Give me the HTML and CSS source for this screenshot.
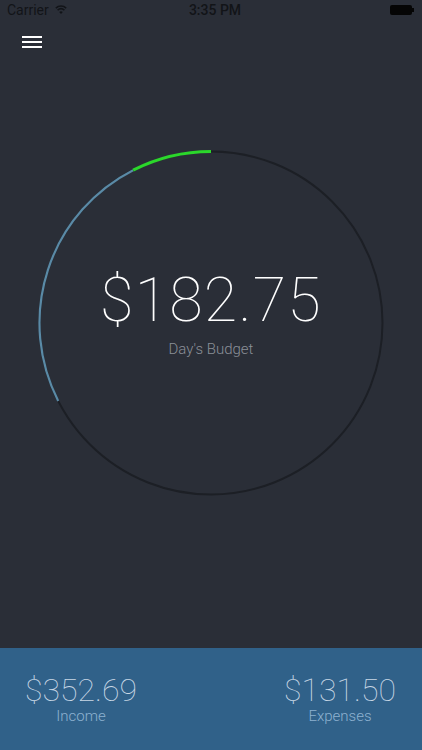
FILE: index.html
```html
<!DOCTYPE html>
<html lang="en">
<head>
    <meta charset="UTF-8">
    <meta name="viewport" content="width=device-width, initial-scale=1.0">
    <title>Day's Budget</title>
    <link rel="stylesheet" href="styles.css">
</head>
<body>
    <div class="app">
        <div class="status-bar">
            <div class="status-left">
                <span>Carrier</span>
                <svg class="wifi" width="12" height="9" viewBox="0 0 12 9">
                    <path d="M6 9 L4.2 6.9 A2.8 2.8 0 0 1 7.8 6.9 Z" fill="#121418"/>
                    <path d="M2.6 5.1 A5.2 5.2 0 0 1 9.4 5.1" fill="none" stroke="#121418" stroke-width="1.5"/>
                    <path d="M0.8 3.1 A7.8 7.8 0 0 1 11.2 3.1" fill="none" stroke="#121418" stroke-width="1.5"/>
                </svg>
            </div>
            <div class="status-time">3:35 PM</div>
            <div class="status-right">
                <span class="battery"></span>
                <span class="battery-nub"></span>
            </div>
        </div>

        <header class="nav">
            <button class="menu-btn" aria-label="Menu">
                <span></span><span></span><span></span>
            </button>
        </header>

        <main class="budget">
            <div class="ring">
                <svg class="ring-svg" width="346" height="346" viewBox="0 0 346 346">
                    <circle cx="173" cy="173" r="171.5" fill="none" stroke="#1c1f25" stroke-width="2"/>
                    <!-- blue part: 27deg to 117deg counter clockwise from top -->
                    <path d="M95.1 20.2 A171.5 171.5 0 0 0 20.2 250.9" fill="none" stroke="#5a8aa6" stroke-width="2.2"/>
                    <!-- green part: top to 27deg -->
                    <path d="M173 1.5 A171.5 171.5 0 0 0 95.1 20.2" fill="none" stroke="#2bd72b" stroke-width="3"/>
                </svg>
                <div class="ring-text">
                    <div class="amount">$182.75</div>
                    <div class="amount-label">Day's Budget</div>
                </div>
            </div>
        </main>

        <footer class="totals">
            <div class="total">
                <div class="total-value">$352.69</div>
                <div class="total-label">Income</div>
            </div>
            <div class="total">
                <div class="total-value">$131.50</div>
                <div class="total-label">Expenses</div>
            </div>
        </footer>
    </div>
</body>
</html>
```

FILE: styles.css
```css
body {
    margin: 0;
    padding: 0;
    font-family: Roboto, "Liberation Sans", Arial, sans-serif;
    background-color: #2a2e37;
}

.app {
    width: 422px;
    height: 750px;
    display: flex;
    flex-direction: column;
    background-color: #2a2e37;
    overflow: hidden;
}

/* status bar */
.status-bar {
    height: 20px;
    display: flex;
    align-items: center;
    justify-content: space-between;
    padding: 0 7px;
    font-size: 14px;
    color: #121418;
}

.status-left {
    display: flex;
    align-items: center;
    gap: 6px;
    width: 100px;
}

.wifi {
    margin-top: -1px;
}

.status-time {
    font-weight: 500;
    padding-left: 8px;
}

.status-right {
    width: 100px;
    display: flex;
    justify-content: flex-end;
    align-items: center;
}

.battery {
    width: 22px;
    height: 10px;
    background-color: #050505;
    border-radius: 2px;
}

.battery-nub {
    width: 1.5px;
    height: 4px;
    background-color: #050505;
    margin-right: 1px;
}

/* nav */
.nav {
    padding: 16px 0 0 22px;
}

.menu-btn {
    display: flex;
    flex-direction: column;
    gap: 3px;
    width: 20px;
    padding: 0;
    border: none;
    background: none;
    cursor: pointer;
}

.menu-btn span {
    display: block;
    height: 2px;
    width: 20px;
    background-color: #ffffff;
}

/* ring */
.budget {
    flex: 1;
    display: flex;
    justify-content: center;
    padding-top: 102px;
}

.ring {
    display: grid;
    width: 346px;
    height: 346px;
}

.ring-svg,
.ring-text {
    grid-area: 1 / 1;
}

.ring-text {
    display: flex;
    flex-direction: column;
    align-items: center;
    padding-top: 120px;
}

.amount {
    font-size: 61px;
    line-height: 61px;
    font-weight: 100;
    color: #ffffff;
    letter-spacing: 1.2px;
}

.amount-label {
    margin-top: 9px;
    font-size: 15px;
    line-height: 18px;
    font-weight: 300;
    color: #8b9098;
}

/* totals */
.totals {
    height: 102px;
    box-sizing: border-box;
    background-color: #306189;
    display: flex;
    justify-content: space-between;
    padding: 26px 26px 0 25px;
}

.total {
    display: flex;
    flex-direction: column;
    align-items: center;
}

.total-value {
    font-size: 32px;
    line-height: 32px;
    font-weight: 100;
    color: #c9d8e6;
    letter-spacing: 0;
}

.total-label {
    margin-top: 1px;
    font-size: 15px;
    line-height: 18px;
    font-weight: 300;
    color: #8db1d0;
}
```
